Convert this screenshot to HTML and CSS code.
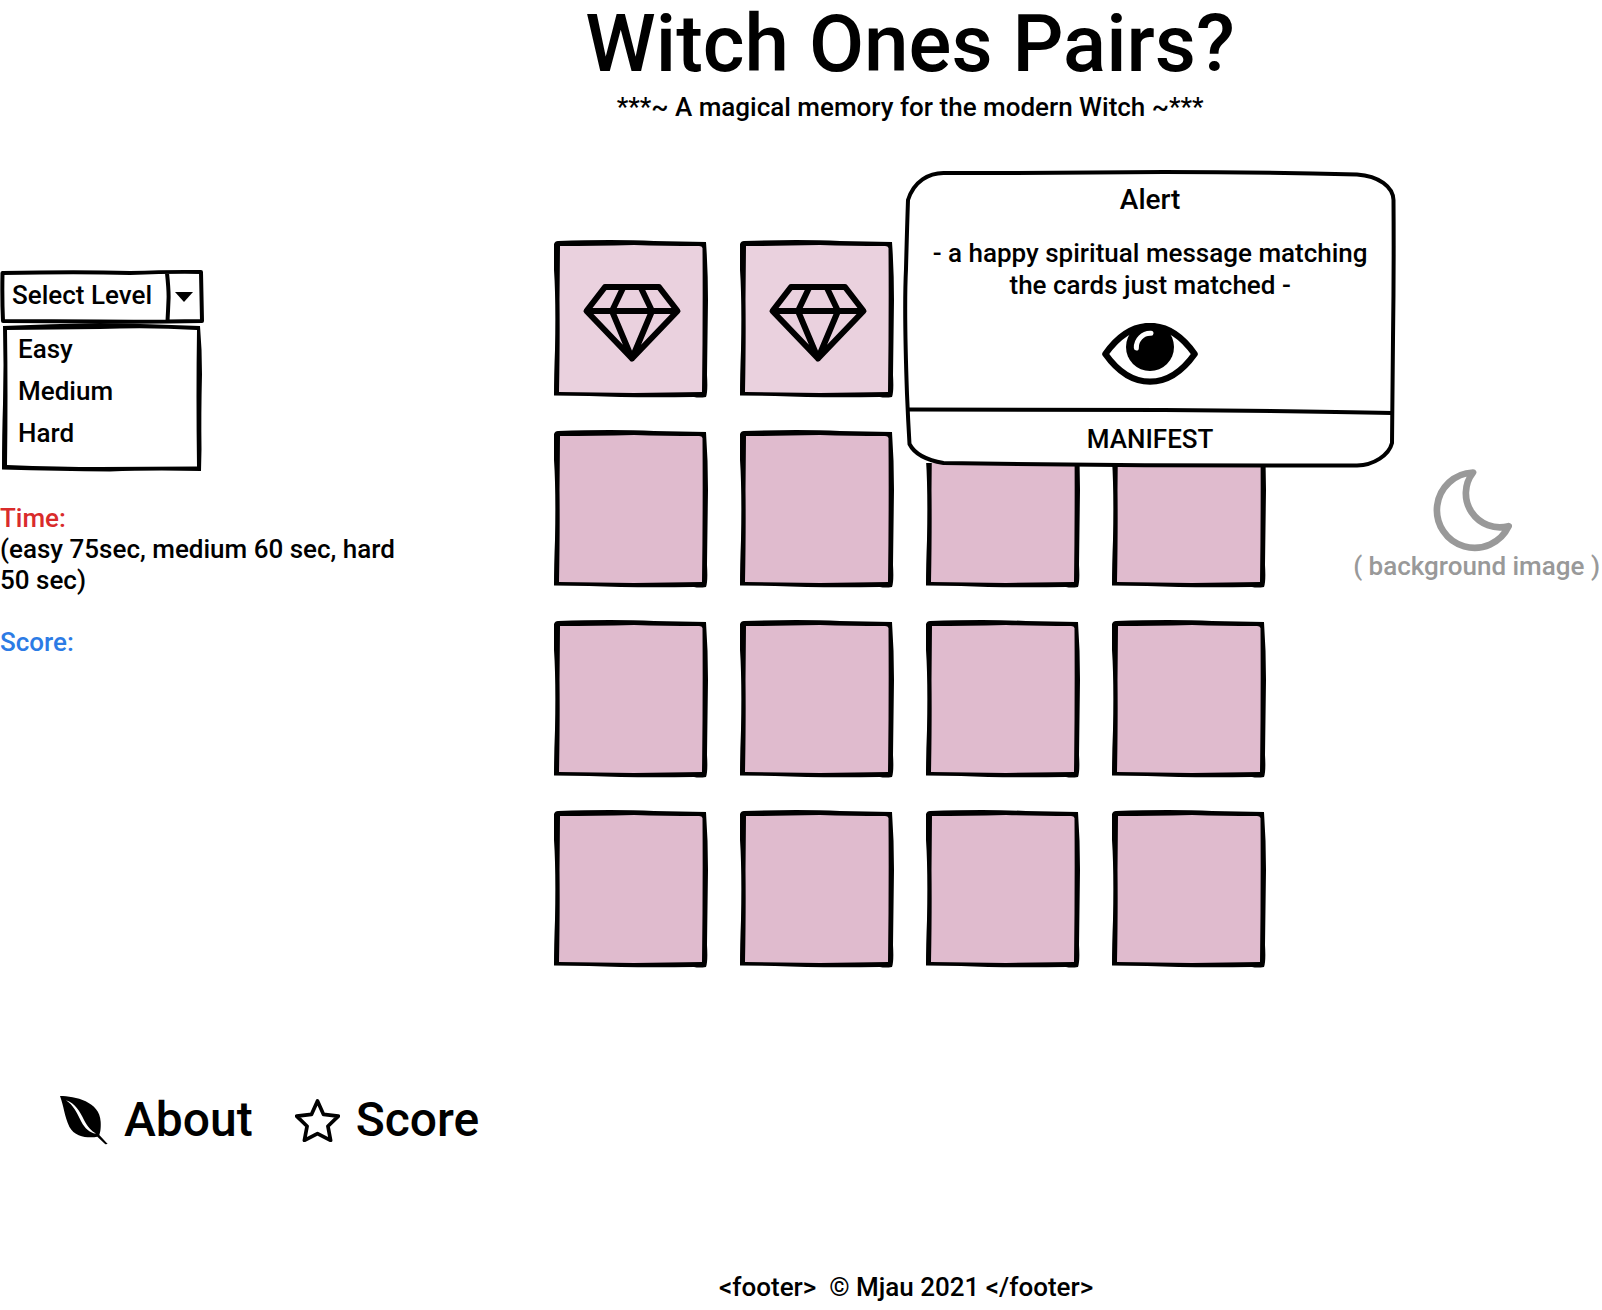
FILE: index.html
```html
<!DOCTYPE html>
<html lang="en">
<head>
<meta charset="utf-8">
<meta name="viewport" content="width=device-width, initial-scale=1">
<title>Witch Ones Pairs?</title>
<link rel="stylesheet" href="styles.css">
</head>
<body>
<svg class="defs" aria-hidden="true">
  <symbol id="frame" viewBox="0 0 154 158" preserveAspectRatio="none">
    <path class="fill" d="M3 3H150V155H3Z"/>
    <path d="M0 4Q1 1 4 1Q60-1 100 1L152 2Q154 30 154 60L153 135Q154 152 152 157Q145 158 140 157Q80 158 35 156L0 155.500Q0 135 1 110Q2 60 0 30ZM6 6L5.500 60Q6 100 5 152L80 153L148 152Q149 80 148.500 8Q148 6 145 6Q110 6 80 5Q40 6 6 6Z" fill-rule="evenodd"/>
  </symbol>
  <symbol id="gem" viewBox="0 0 154 158">
    <path d="M51 47H105L123.500 71L78 118.500L32.500 71ZM32.500 71H123.500M69 48L58 71L78 118.500L98 71L87 48" fill="none" stroke="#000" stroke-width="6" stroke-linejoin="round"/>
  </symbol>
</svg>

<div class="page">
  <header class="header">
    <h1 class="title">Witch Ones Pairs?</h1>
    <p class="subtitle">***~ A magical memory for the modern Witch ~***</p>
  </header>

  <main class="game">
    <section class="controls">
      <div class="stack picker">
        <svg class="art" viewBox="0 0 204 54" preserveAspectRatio="none" aria-hidden="true">
          <path d="M2.500 3Q80 1.500 130 3Q170 1.500 201 2L202 51Q150 52 100 51.500L3 51Q2 30 2.500 3ZM167 3Q169 22 168.500 30Q168 42 167.500 51" fill="none" stroke="#000" stroke-width="4" stroke-linejoin="round"/>
          <path d="M175 22L193 22L184 32Z"/>
        </svg>
        <select class="select" aria-label="Level"><option>Select Level</option></select>
      </div>
      <div class="stack menu">
        <svg class="art" viewBox="0 0 204 148" preserveAspectRatio="none" aria-hidden="true">
          <path d="M3 2Q50 0 100-1Q150 0 200 2Q202 25 202 50Q201 90 201.500 125L201 147Q150 146 110 147.500Q60 147 2 145.500Q2 110 3 80Q4 40 3 2ZM7 6Q8 70 7 141Q60 143 100 143L197 142.500Q196 70 197 6Q150 3 100 5Z" fill-rule="evenodd"/>
        </svg>
        <ul class="levels">
          <li><button class="level" type="button">Easy</button></li>
          <li><button class="level" type="button">Medium</button></li>
          <li><button class="level" type="button">Hard</button></li>
        </ul>
      </div>
      <div class="status">
        <p class="time">Time:</p>
        <p>(easy 75sec, medium 60 sec, hard 50 sec)</p>
        <p class="score">Score:</p>
      </div>
    </section>

    <section class="board" aria-label="Cards">
      <button class="stack card open" type="button" aria-label="Gem"><svg class="art"><use href="#frame"/></svg><svg class="art"><use href="#gem"/></svg></button>
      <button class="stack card open" type="button" aria-label="Gem"><svg class="art"><use href="#frame"/></svg><svg class="art"><use href="#gem"/></svg></button>
      <button class="stack card" type="button" aria-label="Card"><svg class="art"><use href="#frame"/></svg></button>
      <button class="stack card" type="button" aria-label="Card"><svg class="art"><use href="#frame"/></svg></button>
      <button class="stack card" type="button" aria-label="Card"><svg class="art"><use href="#frame"/></svg></button>
      <button class="stack card" type="button" aria-label="Card"><svg class="art"><use href="#frame"/></svg></button>
      <button class="stack card" type="button" aria-label="Card"><svg class="art"><use href="#frame"/></svg></button>
      <button class="stack card" type="button" aria-label="Card"><svg class="art"><use href="#frame"/></svg></button>
      <button class="stack card" type="button" aria-label="Card"><svg class="art"><use href="#frame"/></svg></button>
      <button class="stack card" type="button" aria-label="Card"><svg class="art"><use href="#frame"/></svg></button>
      <button class="stack card" type="button" aria-label="Card"><svg class="art"><use href="#frame"/></svg></button>
      <button class="stack card" type="button" aria-label="Card"><svg class="art"><use href="#frame"/></svg></button>
      <button class="stack card" type="button" aria-label="Card"><svg class="art"><use href="#frame"/></svg></button>
      <button class="stack card" type="button" aria-label="Card"><svg class="art"><use href="#frame"/></svg></button>
      <button class="stack card" type="button" aria-label="Card"><svg class="art"><use href="#frame"/></svg></button>
      <button class="stack card" type="button" aria-label="Card"><svg class="art"><use href="#frame"/></svg></button>

      <div class="stack alert" role="alertdialog" aria-labelledby="alert-title">
        <svg class="art" viewBox="0 0 492 300" preserveAspectRatio="none" aria-hidden="true">
          <path d="M8 240H480V294H8Z" fill="#fff"/>
          <path d="M39.500 4Q160 4 260 3Q350 3 453 5.500C475 7 489 18 489.500 31Q490 100 489 170L488 274C485 286 470 296 453 296.500Q250 297 39.500 294C22 291 10 284 5.500 275Q4 250 3 225Q0 140 2 100Q3 60 4 31C10 12 25 4 39.500 4Z" fill="#fff" stroke="#000" stroke-width="4" stroke-linejoin="round"/>
          <path d="M5 240.500Q130 241 260 241Q400 242 488 244" fill="none" stroke="#000" stroke-width="4"/>
        </svg>
        <div class="dialog">
          <h2 class="alert-title" id="alert-title">Alert</h2>
          <p class="message">- a happy spiritual message matching the cards just matched -</p>
          <svg class="eye" viewBox="636 489 288 186" aria-hidden="true">
            <path d="M646 582Q705 498 780 498Q855 498 914 582Q855 665 780 665Q705 665 646 582Z" fill="#fff" stroke="#000" stroke-width="19" stroke-linejoin="round"/>
            <circle cx="780" cy="561" r="72"/>
            <path d="M739 564A42 42 0 0 1 783 520" fill="none" stroke="#fff" stroke-width="15" stroke-linecap="round"/>
          </svg>
          <button class="manifest" type="button">MANIFEST</button>
        </div>
      </div>
    </section>

    <aside class="backdrop">
      <svg class="moon" viewBox="282 58 237 248" aria-hidden="true">
        <path d="M402 68A113 113 0 1 0 509 229A102 102 0 0 1 402 68Z" fill="none" stroke="#999" stroke-width="20" stroke-linejoin="round"/>
      </svg>
      <p>( background image )</p>
    </aside>
  </main>

  <nav class="nav">
    <a class="link" href="#about">
      <svg class="leaf" viewBox="60 53 144 147" aria-hidden="true">
        <path d="M60 53C105 53 180 70 182 130C183 150 181 160 178 170L203 197L196 198L172 175C150 180 105 178 88 145C72 110 72 85 60 53Z"/>
        <path d="M78 66C105 74 120 100 132 125C143 147 155 158 168 166C148 162 135 150 124 130C110 103 100 80 78 66Z" fill="#fff"/>
      </svg>
      About
    </a>
    <a class="link" href="#score">
      <svg class="star" viewBox="765 44 134 128" aria-hidden="true">
        <path d="M832 50L850 90L894 95L863 125L871 167L832 147L793 167L801 125L770 95L814 90Z" fill="none" stroke="#000" stroke-width="11" stroke-linejoin="round"/>
      </svg>
      Score
    </a>
  </nav>

  <footer class="footer">&lt;footer&gt;&nbsp; © Mjau 2021 &lt;/footer&gt;</footer>
</div>
</body>
</html>
```
FILE: styles.css
```css
* {
  box-sizing: border-box;
}

body {
  margin: 0;
  background: #fff;
  color: #000;
  font: 500 26px/31px Roboto, sans-serif;
}

h1, h2, p, ul {
  margin: 0;
  padding: 0;
  font-weight: inherit;
}

button, select {
  padding: 0;
  border: 0;
  background: none;
  color: inherit;
  font: inherit;
  cursor: pointer;
}

.defs {
  position: absolute;
  width: 0;
  height: 0;
}

.page, .game {
  display: grid;
  grid-template-columns: minmax(0, 33fr) 712px minmax(0, 20fr);
}

.header {
  grid-column: 2;
  text-align: center;
}

.title {
  font-size: 80px;
  line-height: 88px;
}

.subtitle {
  margin-top: 4px;
}

.game {
  grid-column: 1 / -1;
  margin-top: 117px;
}

/* Hand-drawn frames share one grid cell with their content. */
.stack {
  display: grid;
}

.stack > * {
  grid-area: 1 / 1;
}

.art {
  display: block;
  width: 100%;
  height: 100%;
  overflow: visible;
}

.controls {
  padding-top: 30px;
}

.picker {
  width: 204px;
  height: 54px;
}

.select {
  appearance: none;
  padding: 0 40px 4px 12px;
}

.menu {
  width: 204px;
  height: 148px;
}

.levels {
  padding: 4px 18px;
  list-style: none;
}

.level {
  display: block;
  width: 100%;
  line-height: 42px;
  text-align: left;
}

.status {
  max-width: 400px;
  margin-top: 31px;
}

.time {
  color: #d92b2b;
}

.score {
  margin-top: 31px;
  color: #2c7be5;
}

.board {
  position: relative;
  display: grid;
  grid-template-columns: repeat(4, 154px);
  grid-auto-rows: 158px;
  gap: 32px;
}

.fill {
  fill: currentColor;
}

.card {
  color: #e0bbce;
}

.open {
  color: #ead1de;
}

.alert {
  position: absolute;
  top: -71px;
  left: 350px;
  width: 492px;
  height: 300px;
}

.dialog {
  display: flex;
  flex-direction: column;
  align-items: center;
  padding: 15px 16px 0;
  line-height: 32px;
  text-align: center;
}

.alert-title {
  font-size: 28px;
}

.message {
  margin-top: 21px;
}

.eye {
  width: 96px;
  height: 62px;
  margin-top: 22px;
}

.manifest {
  width: 100%;
  margin-top: 26px;
  line-height: 56px;
}

.backdrop {
  display: flex;
  flex-direction: column;
  align-items: flex-end;
  padding: 229px 2px 0 0;
  color: #999;
  line-height: 28px;
  white-space: nowrap;
}

.moon {
  width: 79px;
  height: 83px;
  margin-right: 88px;
}

.nav {
  display: flex;
  grid-column: 1 / 3;
  gap: 42px;
  margin-top: 124px;
  padding-left: 60px;
}

.link {
  display: flex;
  align-items: center;
  gap: 16px;
  color: inherit;
  font-size: 48px;
  line-height: 56px;
  text-decoration: none;
}

.leaf {
  width: 48px;
  height: 49px;
}

.star {
  width: 45px;
  height: 43px;
}

.footer {
  grid-column: 2;
  margin-top: 124px;
  padding: 0 8px 8px 0;
  text-align: center;
}
```
